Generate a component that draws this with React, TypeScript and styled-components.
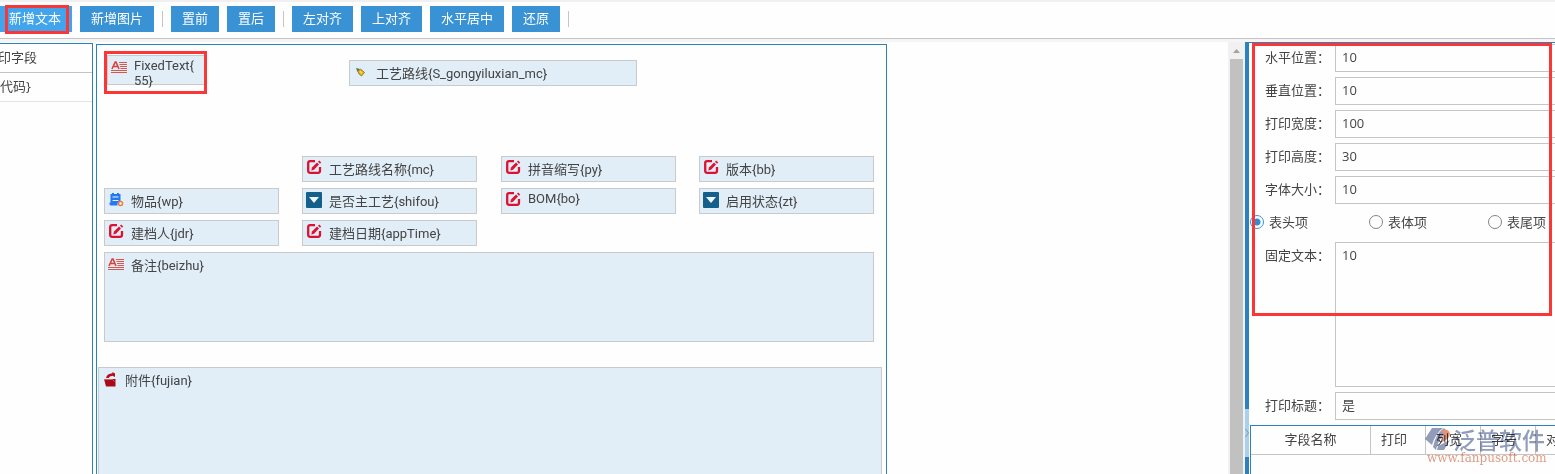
import React from "react";
import styled, { createGlobalStyle } from "styled-components";

const blue = "#2d82bd";
const line = "#c5c5c5";
const cjk = '"Noto Sans CJK SC", sans-serif';

const GlobalStyle = createGlobalStyle`
  *, *::before, *::after { box-sizing: border-box; }
  body {
    margin: 0;
    background: #fefefe;
    color: #444;
    font: 13px/18px "Open Sans", ${cjk};
    overflow: hidden;
  }
  button, input, textarea, select { font: inherit; color: inherit; }
`;

const Page = styled.div`
  display: flex;
  flex-direction: column;
  height: 100vh;
  overflow: hidden;
`;

const Toolbar = styled.header`
  display: flex;
  align-items: center;
  gap: 8px;
  height: 39px;
  margin-left: -2px;
  padding-bottom: 2px;
  border-top: 2px solid #f0f0f0;
  border-bottom: 1px solid ${line};
  flex: none;
`;

const ToolButton = styled.button<{ $active?: boolean }>`
  height: 26px;
  padding: 0 11px 2px;
  border: 0;
  border-radius: 0;
  background: ${(p) => (p.$active ? "#41a5ee" : "#3892d4")};
  color: #fff;
  line-height: 24px;
  white-space: nowrap;
  cursor: pointer;
`;

const Separator = styled.span`
  width: 1px;
  height: 16px;
  background: ${line};
`;

const Marked = styled.div`
  position: relative;
  display: flex;
`;

const Mark = styled.span`
  position: absolute;
  border: 3px solid #fb3637;
  pointer-events: none;
  z-index: 2;
`;

const ButtonMark = styled(Mark)`
  inset: -1px 3px -2px 7px;
`;

const CanvasMark = styled(Mark)`
  left: 7px;
  top: 6px;
  width: 103px;
  height: 43px;
`;

const PanelMark = styled(Mark)`
  left: 3px;
  right: 3px;
  top: 0;
  height: 273px;
`;

const Body = styled.main`
  display: flex;
  flex: 1;
  min-height: 0;
  border-top: 3px solid #f5f5f5;
`;

const FieldList = styled.ul`
  flex: none;
  width: 109px;
  margin: 1px 3px 0 -16px;
  padding: 0;
  list-style: none;
  border: 1px solid ${blue};
  border-bottom: 0;
  background: #fefefe;
`;

const FieldListItem = styled.li<{ $head?: boolean }>`
  height: 29px;
  line-height: 27px;
  border-bottom: 1px solid ${(p) => (p.$head ? line : "#e4e4e4")};
  white-space: nowrap;
`;

const Workspace = styled.section`
  flex: 1;
  min-width: 0;
  padding-top: 2px;
  overflow: hidden;
`;

const Canvas = styled.div`
  position: relative;
  width: 791px;
  height: 1120px;
  border: 1px solid ${blue};
`;

const FieldBox = styled.div<{ $x: number; $y: number; $w: number; $h: number }>`
  position: absolute;
  left: ${(p) => p.$x}px;
  top: ${(p) => p.$y}px;
  width: ${(p) => p.$w}px;
  height: ${(p) => p.$h}px;
  display: flex;
  align-items: flex-start;
  gap: 7px;
  padding: 2px 8px 0 3px;
  border: 1px solid #c8cacc;
  background: #e1eef8;
  font-family: Roboto, ${cjk};
  line-height: normal;
  svg { flex: none; margin-top: 1px; }
`;

const FieldText = styled.span`
  min-width: 0;
  line-break: anywhere;
`;

const ScrollTrack = styled.div`
  flex: none;
  width: 17px;
  display: flex;
  flex-direction: column;
  align-items: center;
  background: #f1f1f1;
  svg { flex: none; }
`;

const ScrollThumb = styled.div`
  flex: 1;
  width: 13px;
  background: #c1c1c1;
`;

const Splitter = styled.div`
  flex: none;
  width: 4px;
  padding-top: 367px;
  background: ${blue};
`;

const SplitHandle = styled.button`
  display: block;
  width: 4px;
  height: 48px;
  padding: 0;
  border: 0;
  background: #abd0ec;
  svg { display: block; }
`;

const Properties = styled.aside`
  position: relative;
  flex: none;
  width: 306px;
  padding-left: 1px;
  border-top: 1px solid ${blue};
  overflow: hidden;
`;

const Form = styled.form`
  display: flex;
  flex-direction: column;
  gap: 5px;
  width: 340px;
  padding: 1px 0 5px;
`;

const FormRow = styled.div`
  display: flex;
`;

const Label = styled.label`
  flex: none;
  width: 85px;
  padding-left: 15px;
  line-height: 26px;
`;

const TextInput = styled.input`
  flex: 1;
  min-width: 0;
  height: 28px;
  padding: 0 6px 3px;
  border: 1px solid ${line};
  background: #fefefe;
  outline: 0;
`;

const SelectInput = styled.select`
  flex: 1;
  height: 28px;
  padding: 0 6px 3px;
  border: 1px solid ${line};
  border-radius: 0;
  background: #fefefe;
  appearance: none;
`;

const TextArea = styled.textarea`
  flex: 1;
  height: 145px;
  padding: 3px 6px;
  border: 1px solid ${line};
  background: #fefefe;
  outline: 0;
  resize: none;
`;

const RadioRow = styled.div`
  display: grid;
  grid-template-columns: repeat(3, 119px);
  height: 28px;
  padding-bottom: 2px;
`;

const RadioLabel = styled.label`
  display: flex;
  align-items: center;
  gap: 5px;
  white-space: nowrap;
`;

const Radio = styled.input`
  appearance: none;
  width: 14px;
  height: 14px;
  margin: 0;
  border: 1px solid #858585;
  border-radius: 50%;
  background: #fefefe;
  &:checked {
    border-color: #3892d4;
    background: radial-gradient(circle, #2f8fd6 3px, #fefefe 4px);
  }
`;

const Columns = styled.table`
  table-layout: fixed;
  width: 341px;
  height: 600px;
  border-collapse: separate;
  border-spacing: 0;
  border: 1px solid ${blue};
`;

const Th = styled.th<{ $wide?: boolean }>`
  width: ${(p) => (p.$wide ? 120 : 55)}px;
  height: 29px;
  padding: 0 0 2px ${(p) => (p.$wide ? 0 : 10)}px;
  border-right: 1px solid ${line};
  border-bottom: 1px solid ${line};
  font-weight: 400;
  text-align: ${(p) => (p.$wide ? "center" : "left")};
`;

const Watermark = styled.div`
  position: absolute;
  left: 176px;
  top: 383px;
  width: 124px;
  opacity: 0.8;
  mix-blend-mode: multiply;
  pointer-events: none;
`;

const Brand = styled.div`
  display: flex;
  align-items: center;
  gap: 2px;
  height: 26px;
  color: #7685aa;
  font: 500 23px/26px ${cjk};
  white-space: nowrap;
`;

const Site = styled.div`
  padding-left: 2px;
  color: #da8365;
  font: 12px/12px "DejaVu Serif", serif;
`;

type IconName = "text" | "pen" | "edit" | "item" | "select" | "attach";

const Icon = ({ name }: { name: IconName }) => {
  switch (name) {
    case "text":
      return (
        <svg width="16" height="16" viewBox="0 0 16 16" aria-hidden="true">
          <path d="M1 10L4.200 3H5L8 10M2.500 7.500H7" fill="none" stroke="#dc4036" strokeWidth="1.600" />
          <path d="M8 3.500H16M8.500 5.500H16M9 7.500H16M9.500 9.500H16M0 11.500H16M0 13.500H16" stroke="#d9564b" strokeWidth="1" />
        </svg>
      );
    case "pen":
      return (
        <svg width="16" height="16" viewBox="0 0 16 16" aria-hidden="true">
          <path d="M3 4L7 5L4.500 8Z" fill="#6b665c" />
          <path d="M5 7.500L7.500 5L11.500 8.500L8.500 12L6 10Z" fill="#edb70b" stroke="#7d6930" strokeWidth="0.800" />
          <path d="M7 7L9 9.500" stroke="#ffe25a" strokeWidth="1.200" />
        </svg>
      );
    case "edit":
      return (
        <svg width="16" height="16" viewBox="0 0 16 16" aria-hidden="true">
          <path d="M9 1.200H4.200Q2.200 1.200 2.200 3.200V10.800Q2.200 12.800 4.200 12.800H12Q14 12.800 14 10.800V7" fill="none" stroke="#dc1230" strokeWidth="2.300" />
          <path d="M5.300 10.500L6 7.600L11 2.600L13 4.600L8 9.700Z" fill="#dc1230" />
          <path d="M12 1.700L13.200 0.500L15.200 2.500L14 3.700Z" fill="#dc1230" />
        </svg>
      );
    case "item":
      return (
        <svg width="16" height="16" viewBox="0 0 16 16" aria-hidden="true">
          <path d="M2.500 2H4V1H6V2H9V1H11V2H12.500V9A4 4 0 0 0 9.500 13.500H3Q1.500 13.500 1.500 12V10.500H2.500Z" fill="#2478f0" />
          <path d="M4.500 5H10.500M4.500 8.500H10.500" stroke="#e8f2ff" strokeWidth="1.200" />
          <circle cx="12.500" cy="11.500" r="2" fill="#fff" stroke="#f07838" strokeWidth="1.500" />
        </svg>
      );
    case "select":
      return (
        <svg width="16" height="16" viewBox="0 0 16 16" aria-hidden="true">
          <rect width="16" height="16" rx="1" fill="#155f8c" />
          <path d="M3 5H13L8 11Z" fill="#f2f8fc" />
        </svg>
      );
    case "attach":
      return (
        <svg width="16" height="16" viewBox="0 0 16 16" aria-hidden="true">
          <path d="M4 7Q5 2.500 10.500 2.200V1L13 2.500V6L10.500 4.800Q7.500 5 6.500 7Z" fill="#b30d1c" />
          <path d="M2 8H13.500V15.500H4Z" fill="#a80a18" />
          <path d="M2 8.500H10.500L12.500 10.500" fill="none" stroke="#d9747b" strokeWidth="0.800" />
        </svg>
      );
  }
};

const fields: { label: string; icon: IconName; x: number; y: number; w: number; h: number }[] = [
  { label: "FixedText{55}", icon: "text", x: 10, y: 10, w: 100, h: 30 },
  { label: "工艺路线{S_gongyiluxian_mc}", icon: "pen", x: 252, y: 15, w: 288, h: 26 },
  { label: "工艺路线名称{mc}", icon: "edit", x: 205, y: 111, w: 175, h: 26 },
  { label: "拼音缩写{py}", icon: "edit", x: 404, y: 111, w: 175, h: 26 },
  { label: "版本{bb}", icon: "edit", x: 602, y: 111, w: 175, h: 26 },
  { label: "物品{wp}", icon: "item", x: 7, y: 143, w: 175, h: 26 },
  { label: "是否主工艺{shifou}", icon: "select", x: 205, y: 143, w: 175, h: 26 },
  { label: "BOM{bo}", icon: "edit", x: 404, y: 143, w: 175, h: 26 },
  { label: "启用状态{zt}", icon: "select", x: 602, y: 143, w: 175, h: 26 },
  { label: "建档人{jdr}", icon: "edit", x: 7, y: 175, w: 175, h: 26 },
  { label: "建档日期{appTime}", icon: "edit", x: 205, y: 175, w: 175, h: 26 },
  { label: "备注{beizhu}", icon: "text", x: 7, y: 207, w: 770, h: 90 },
  { label: "附件{fujian}", icon: "attach", x: 1, y: 322, w: 784, h: 260 },
];

const inputs = [
  { id: "left", label: "水平位置", value: "10" },
  { id: "top", label: "垂直位置", value: "10" },
  { id: "width", label: "打印宽度", value: "100" },
  { id: "height", label: "打印高度", value: "30" },
  { id: "size", label: "字体大小", value: "10" },
];

export default function App() {
  return (
    <Page>
      <GlobalStyle />
      <Toolbar>
        <Marked>
          <ToolButton $active>新增文本</ToolButton>
          <ButtonMark />
        </Marked>
        <ToolButton>新增图片</ToolButton>
        <Separator />
        <ToolButton>置前</ToolButton>
        <ToolButton>置后</ToolButton>
        <Separator />
        <ToolButton>左对齐</ToolButton>
        <ToolButton>上对齐</ToolButton>
        <ToolButton>水平居中</ToolButton>
        <ToolButton>还原</ToolButton>
        <Separator />
      </Toolbar>
      <Body>
        <FieldList>
          <FieldListItem $head>打印字段</FieldListItem>
          <FieldListItem>{"{x:代码}"}</FieldListItem>
        </FieldList>
        <Workspace>
          <Canvas>
            {fields.map((f) => (
              <FieldBox key={f.label} $x={f.x} $y={f.y} $w={f.w} $h={f.h}>
                <Icon name={f.icon} />
                <FieldText>{f.label}</FieldText>
              </FieldBox>
            ))}
            <CanvasMark />
          </Canvas>
        </Workspace>
        <ScrollTrack aria-hidden="true">
          <svg width="17" height="17" viewBox="0 0 17 17">
            <path d="M5 11L8.500 7L12 11Z" fill="#a3a3a3" />
          </svg>
          <ScrollThumb />
        </ScrollTrack>
        <Splitter>
          <SplitHandle aria-label="折叠">
            <svg width="4" height="48" viewBox="0 0 4 48" aria-hidden="true">
              <path d="M0.500 20L3.500 24L0.500 28" fill="none" stroke="#5f9cc8" />
            </svg>
          </SplitHandle>
        </Splitter>
        <Properties>
          <Form>
            {inputs.map((f) => (
              <FormRow key={f.id}>
                <Label htmlFor={f.id}>{f.label}：</Label>
                <TextInput id={f.id} defaultValue={f.value} />
              </FormRow>
            ))}
            <RadioRow>
              {["表头项", "表体项", "表尾项"].map((t, i) => (
                <RadioLabel key={t}>
                  <Radio type="radio" name="part" defaultChecked={i === 0} />
                  {t}
                </RadioLabel>
              ))}
            </RadioRow>
            <FormRow>
              <Label htmlFor="fixed">固定文本：</Label>
              <TextArea id="fixed" defaultValue="10" />
            </FormRow>
            <FormRow>
              <Label htmlFor="title">打印标题：</Label>
              <SelectInput id="title" defaultValue="是">
                <option>是</option>
                <option>否</option>
              </SelectInput>
            </FormRow>
          </Form>
          <Columns>
            <thead>
              <tr>
                <Th $wide>字段名称</Th>
                <Th>打印</Th>
                <Th>列宽</Th>
                <Th>字号</Th>
                <Th>对齐</Th>
              </tr>
            </thead>
            <tbody>
              <tr>
                <td colSpan={5} />
              </tr>
            </tbody>
          </Columns>
          <PanelMark />
          <Watermark>
            <Brand>
              <svg width="26" height="26" viewBox="0 0 26 26" aria-hidden="true">
                <path d="M7 2H18Q10 8 7 19L0 13Z" fill="#7685aa" />
                <path d="M19 2Q10 9 8 21L11 24Q13 13 22 6Z" fill="#7685aa" />
                <path d="M16 4Q24 2 25 8Q24 14 15 17Q21 11 16 4Z" fill="#dc7a58" />
                <path d="M13 20L25 14L19 24H12Z" fill="#7685aa" />
              </svg>
              泛普软件
            </Brand>
            <Site>www.fanpusoft.com</Site>
          </Watermark>
        </Properties>
      </Body>
    </Page>
  );
}
